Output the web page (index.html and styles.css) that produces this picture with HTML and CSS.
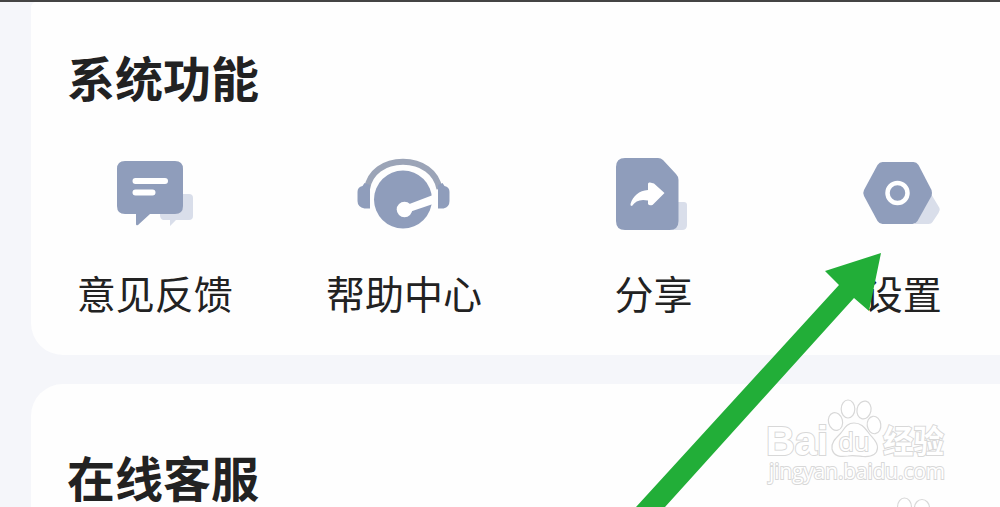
FILE: index.html
```html
<!DOCTYPE html>
<html lang="zh-CN">

<head>
    <meta charset="UTF-8">
    <title>系统功能</title>
    <link rel="stylesheet" href="styles.css">
</head>

<body>
    <div class="card card-system">
        <h2>系统功能</h2>
        <div class="menu">
            <div class="menu-item">
                <svg class="icon" viewBox="0 0 110 95">
                    <path class="shade" d="M62 49H89Q93 49 93 53V71Q93 75 89 75H76L70 81V75H63Q60 74 60 70Z" />
                    <path class="shape" d="M25 16H75Q83 16 83 24V61Q83 69 75 69H50L38 80Q36 81 36 79V69H25Q17 69 17 61V24Q17 16 25 16Z" />
                    <path class="line" d="M35.5 36H65M35.5 47.5H52.5" />
                </svg>
                <span>意见反馈</span>
            </div>
            <div class="menu-item">
                <svg class="icon" viewBox="4.5 0 110 95">
                    <circle class="shape" cx="58.5" cy="54.5" r="29" />
                    <path class="band" d="M22.5 44C25 27 40 16.8 58.5 16.8S92 27 95 44" />
                    <path class="shape" d="M20 38L25.5 40V63.5H20Q13 62 13 56V47Q13 42 18 41ZM98 38L93.5 40V63.5H99Q105 62 105 56V47Q105 42 100 41Z" />
                    <path class="needle" d="M57 62L88.5 50V59L62 68Z" />
                    <circle class="needle" cx="60" cy="64.5" r="7.8" />
                </svg>
                <span>帮助中心</span>
            </div>
            <div class="menu-item">
                <svg class="icon" viewBox="-1 0 110 95">
                    <path class="shade" d="M70 57H85Q88 57 88 60V80Q88 85 83 85H68Z" />
                    <path class="shape" d="M26 13H59Q62 13 64 15L77 29Q79.5 31.5 79.5 35V76Q79.5 85 70.5 85H26Q17 85 17 76V22Q17 13 26 13Z" />
                    <path class="arrow-mark" d="M49 39Q49 37 51 37.5L55 38.5L65.5 48L53.5 60Q50 61 49 59V55.5Q38 53 33 61Q31 61 31.5 59C34 51 40 45.5 49 45Z" />
                </svg>
                <span>分享</span>
            </div>
            <div class="menu-item">
                <svg class="icon" viewBox="-1.5 0 110 95">
                    <path class="shade" d="M81 48L90 63Q91 65 89 68L83 77Q82 79 79 79H65Z" />
                    <path class="shape" d="M33 17H64Q67 17 69 20L82 45Q83 48 82 51L68 76Q66 79 63 79H33Q30 79 28 76L14.5 51Q13 48 14.5 45L28 20Q30 17 33 17Z" />
                    <circle class="ring" cx="48" cy="48" r="10" />
                </svg>
                <span>设置</span>
            </div>
        </div>
    </div>
    <div class="card card-service">
        <h2>在线客服</h2>
    </div>

    <!-- pointer to the settings entry -->
    <svg class="pointer" viewBox="0 0 1000 507">
        <path d="M881 253L825 271L839 285L636 507H665L854 298L869 311Z" />
    </svg>

    <svg class="watermark" viewBox="750 385 250 122">
        <text class="brand" x="766" y="455" textLength="62" lengthAdjust="spacingAndGlyphs">Bai</text>
        <g class="paw">
            <ellipse cx="835.5" cy="421.5" rx="7" ry="9" transform="rotate(-15 835.5 421.5)" />
            <ellipse cx="848" cy="409" rx="6.8" ry="9" />
            <ellipse cx="864" cy="410" rx="7" ry="9" transform="rotate(12 864 410)" />
            <ellipse cx="874" cy="425" rx="6.8" ry="8.8" transform="rotate(-8 874 425)" />
            <path d="M854 423C846 423 844 430 840 434C835 439 831 443 832 449C834 457 841 457 848 456C853 455 858 456 863 456.5C871 457 877 455 877.5 448C878 441 871 437 868 432C864 427 861 423 854 423Z" />
        </g>
        <text class="du" x="838.5" y="450.5" textLength="31" lengthAdjust="spacingAndGlyphs">du</text>
        <text class="name" x="883" y="452.5" textLength="61" lengthAdjust="spacingAndGlyphs">经验</text>
        <text class="site" x="769" y="478.5" textLength="176" lengthAdjust="spacingAndGlyphs">jingyan.baidu.com</text>
        <g class="paw">
            <ellipse cx="904.5" cy="507" rx="7" ry="9" />
            <ellipse cx="922" cy="508" rx="7.5" ry="8.5" />
        </g>
    </svg>
</body>

</html>
```
FILE: styles.css
```css
body {
    height: 507px;
    margin: 0;
    box-sizing: border-box;
    border-top: 2px solid #444;
    position: relative;
    overflow: hidden;
    font-family: "Noto Sans CJK SC", sans-serif;
    color: #222;
    background-color: #f5f6fa;
}

.card {
    margin-left: 31px;
    background-color: #fefefe;
}

.card-system {
    height: 353px;
    box-sizing: border-box;
    padding-top: 44px;
    border-radius: 5px 0 0 32px;
}

.card-service {
    height: 123px;
    margin-top: 29px;
    box-sizing: border-box;
    padding-top: 62px;
    border-radius: 32px 0 0 0;
}

h2 {
    margin: 0 0 0 36px;
    font-size: 48px;
    line-height: 60px;
    font-weight: bold;
}

.menu {
    display: grid;
    grid-template-columns: repeat(4, 249.4px);
    margin: 39px 0 0 -1px;
}

.menu-item {
    display: flex;
    flex-direction: column;
    align-items: center;
    gap: 27px;
    font-size: 39px;
    line-height: 50px;
}

.icon {
    width: 110px;
    height: 95px;
}

.shape {
    fill: #8f9dbb;
}

.shade {
    fill: #d9deea;
}

.line {
    fill: none;
    stroke: #fff;
    stroke-width: 6;
    stroke-linecap: round;
}

.band {
    fill: none;
    stroke: #9ba4b7;
    stroke-width: 6;
}

.needle,
.arrow-mark {
    fill: #fff;
}

.ring {
    fill: none;
    stroke: #fff;
    stroke-width: 4.5;
}

.pointer {
    position: absolute;
    top: -2px;
    left: 0;
    width: 1000px;
    height: 507px;
    fill: #22ae38;
}

.watermark {
    position: absolute;
    right: 0;
    bottom: 0;
    width: 250px;
    height: 122px;
    fill: #fff;
    stroke: #d8d8d8;
    stroke-width: 1.2;
}

.watermark text {
    paint-order: stroke;
    stroke-width: 2;
}

.brand {
    font: bold 41px "Liberation Sans", sans-serif;
}

.du {
    font: 26px "Open Sans", sans-serif;
}

.name {
    font: bold 32px "Noto Sans CJK SC", sans-serif;
}

.site {
    font: 22px "Open Sans", sans-serif;
}
```
